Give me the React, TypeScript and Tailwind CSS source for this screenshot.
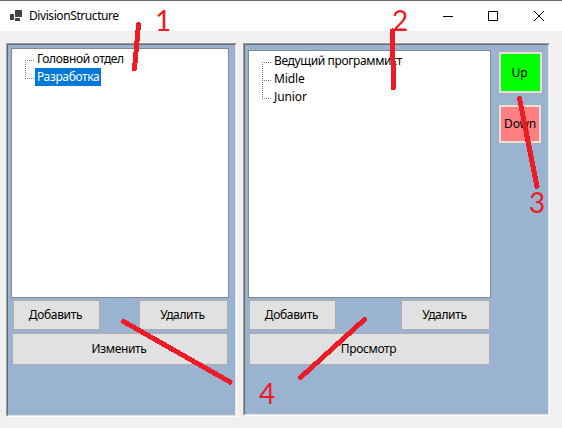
import React from "react";

type Box = { className: string; children: React.ReactNode };

function Btn({ className, children }: Box) {
  return (
    <button className={`flex items-center justify-center border border-[#adadad] bg-[#e1e1e1] p-0 tracking-[-0.35px] text-black ${className}`}>
      <span className="block whitespace-nowrap">{children}</span>
    </button>
  );
}

function Panel({ className, children }: Box) {
  return (
    <section className={`shrink-0 border border-t-[#a0a0a0] border-r-white border-b-white border-l-[#a0a0a0] ${className}`}>
      <div className="h-full border border-t-[#696969] border-r-[#e3e3e3] border-b-[#e3e3e3] border-l-[#696969] bg-[#99b3d0]">
        {children}
      </div>
    </section>
  );
}

function Tree({ items, selected, className }: { items: string[]; selected?: number; className: string }) {
  const h = (items.length - 1) * 18;
  return (
    <div className={`flex border border-[#828790] bg-white pt-px ${className}`}>
      <svg className="ml-[13px] mt-[10px] w-[10px] shrink-0" height={h + 1} shapeRendering="crispEdges" stroke="#808080" strokeDasharray="1 1">
        <path d={`M.5 0V${h}`} />
        {items.map((t, i) => (
          <path key={t} d={`M0 ${i * 18 + 0.5}H10`} />
        ))}
      </svg>
      <ul>
        {items.map((t, i) => (
          <li
            key={t}
            className={`flex h-[18px] w-max items-center whitespace-nowrap px-[2px] ${/[а-я]/.test(t) ? "tracking-[-0.36px]" : "tracking-[-0.1px]"} ${i === selected ? "bg-[#0078d7] text-white" : ""}`}
          >
            {t}
          </li>
        ))}
      </ul>
    </div>
  );
}

export default function App() {
  return (
    <div className="relative h-[428px] w-[562px] overflow-hidden bg-[#f0f0f0] font-['Noto_Sans','Open_Sans',sans-serif] text-[12px] leading-[18px] text-black">
      <header className="flex h-[31px] items-center border-t border-[#6b6b6b] bg-white">
        <svg className="-mt-px ml-[10px] shrink-0" width="12" height="11" shapeRendering="crispEdges" fill="#424242">
          <path d="M5 0h7v7H5zM0 4h4v6H0zM5 8h5v3H5z" />
        </svg>
        <span className="ml-[7px] w-[360px] tracking-[-0.42px]">DivisionStructure</span>
        <svg className="-mt-px ml-[54px]" width="102" height="10" fill="none" stroke="#000">
          <path d="M0 5.500h10M45.500 .5h9v9h-9z" />
          <path d="M91 0l10 10M101 0l-10 10" />
        </svg>
      </header>
      <main className="flex items-start gap-[6px] pl-[6px] pt-[12px]">
        <Panel className="h-[374px] w-[231px]">
          <div className="pl-[3px] pt-[3px]">
            <Tree className="h-[250px] w-[218px]" items={["Головной отдел", "Разработка"]} selected={1} />
            <div className="ml-[2px] mt-[2px] flex gap-[39px]">
              <Btn className="h-[30px] w-[87px] pr-[2px]">Добавить</Btn>
              <Btn className="h-[30px] w-[89px] pr-[2px]">Удалить</Btn>
            </div>
            <Btn className="ml-px mt-[3px] h-[32px] w-[216px] pr-[2px]">Изменить</Btn>
          </div>
        </Panel>
        <Panel className="h-[373px] w-[307px]">
          <div className="flex gap-[7px] pl-[3px]">
            <div className="w-[243px] pt-[5px]">
              <Tree className="h-[248px] w-[243px]" items={["Ведущий программист", "Midle", "Junior"]} />
              <div className="ml-px mt-[2px] flex gap-[65px]">
                <Btn className="h-[30px] w-[87px] pr-[2px]">Добавить</Btn>
                <Btn className="h-[30px] w-[89px] pr-[2px]">Удалить</Btn>
              </div>
              <Btn className="ml-px mt-[3px] h-[32px] w-[241px] pr-[2px]">Просмотр</Btn>
            </div>
            <div className="flex flex-col gap-[10px] pt-[6px]">
              <button className="h-[43px] w-[45px] border border-[#adadad] bg-[#e1e1e1] p-[2px]">
                <span className="flex h-full items-center justify-center bg-[#00ff00] pr-[2px]">Up</span>
              </button>
              <button className="h-[40px] w-[44px] border border-[#adadad] bg-[#e1e1e1] p-[2px]">
                <span className="flex h-full items-center justify-center bg-[#ff8080] tracking-[-0.2px]">Down</span>
              </button>
            </div>
          </div>
        </Panel>
      </main>
      <svg className="pointer-events-none absolute inset-0" width="562" height="428" stroke="#ed1c24" strokeWidth="5" strokeLinecap="round" shapeRendering="crispEdges">
        <path d="M138.500 24.500L134.500 69M392.500 31L393.500 88M519.500 98.500L537 186.500M123.500 321.500L230 382M364.500 319.500L300.500 377.500" />
      </svg>
      <div className="pointer-events-none font-['Lato',sans-serif] text-[28px] leading-[28px] text-[#ed1c24]">
        <span className="absolute left-[155px] top-[6px]">1</span>
        <span className="absolute left-[392px] top-[6px]">2</span>
        <span className="absolute left-[529px] top-[188px]">3</span>
        <span className="absolute left-[259px] top-[379px]">4</span>
      </div>
    </div>
  );
}
